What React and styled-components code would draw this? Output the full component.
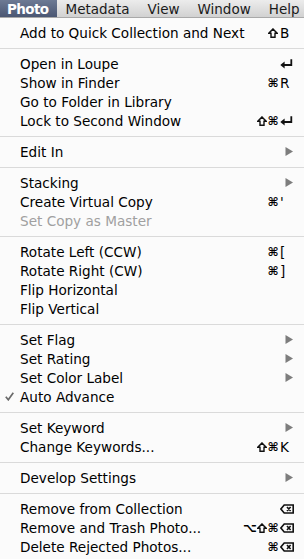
import styled, { createGlobalStyle } from "styled-components";

const GlobalStyle = createGlobalStyle`
  html, body {
    margin: 0;
    padding: 0;
    background: #fbfbfb;
  }
  body {
    font-family: "DejaVu Sans", "Liberation Sans", sans-serif;
    -webkit-font-smoothing: antialiased;
  }
`;

const menuTitles = ["Photo", "Metadata", "View", "Window", "Help"];

// each entry is a row, or "-" for a separator
const items = [
  { label: "Add to Quick Collection and Next", mods: "⇧", key: "B" },
  "-",
  { label: "Open in Loupe", key: "return" },
  { label: "Show in Finder", mods: "⌘", key: "R" },
  { label: "Go to Folder in Library" },
  { label: "Lock to Second Window", mods: "⇧⌘", key: "return" },
  "-",
  { label: "Edit In", submenu: true },
  "-",
  { label: "Stacking", submenu: true },
  { label: "Create Virtual Copy", mods: "⌘", key: "'" },
  { label: "Set Copy as Master", disabled: true },
  "-",
  { label: "Rotate Left (CCW)", mods: "⌘", key: "[" },
  { label: "Rotate Right (CW)", mods: "⌘", key: "]" },
  { label: "Flip Horizontal" },
  { label: "Flip Vertical" },
  "-",
  { label: "Set Flag", submenu: true },
  { label: "Set Rating", submenu: true },
  { label: "Set Color Label", submenu: true },
  { label: "Auto Advance", checked: true },
  "-",
  { label: "Set Keyword", submenu: true },
  { label: "Change Keywords...", mods: "⇧⌘", key: "K" },
  "-",
  { label: "Develop Settings", submenu: true },
  "-",
  { label: "Remove from Collection", key: "delete" },
  { label: "Remove and Trash Photo...", mods: "⌥⇧⌘", key: "delete" },
  { label: "Delete Rejected Photos...", mods: "⌘", key: "delete" },
];

function ShiftIcon() {
  return (
    <svg width="10" height="10" viewBox="0 0 10 10">
      <path
        d="M5 0.9 L9.2 5.3 H7 V9.2 H3 V5.3 H0.8 Z"
        fill="none"
        stroke="#111"
        strokeWidth="1.4"
        strokeLinejoin="miter"
      />
    </svg>
  );
}

function ReturnIcon() {
  return (
    <svg width="13" height="10" viewBox="0 0 13 10">
      <path d="M11.3 0.3 V6 H3" fill="none" stroke="#111" strokeWidth="1.8" />
      <path d="M0.3 6 L4.6 2.6 V9.4 Z" fill="#111" />
    </svg>
  );
}

function DeleteIcon() {
  return (
    <svg width="14" height="10" viewBox="0 0 14 10">
      <path
        d="M4.2 1 H13.2 V9 H4.2 L0.9 5 Z"
        fill="none"
        stroke="#111"
        strokeWidth="1.6"
      />
      <path d="M7 3 L10.6 7 M10.6 3 L7 7" stroke="#111" strokeWidth="1.6" />
    </svg>
  );
}

function SubmenuArrow() {
  return (
    <svg width="8" height="9" viewBox="0 0 8 9">
      <path d="M0.5 0 L8 4.5 L0.5 9 Z" fill="#7d7d7d" />
    </svg>
  );
}

function CheckIcon() {
  return (
    <svg width="9" height="9" viewBox="0 0 9 9">
      <path
        d="M0.8 4.8 L3.3 7.8 L8.3 0.8"
        fill="none"
        stroke="#6a6a6a"
        strokeWidth="1.7"
      />
    </svg>
  );
}

function renderKey(key) {
  if (key === "return") return <ReturnIcon />;
  if (key === "delete") return <DeleteIcon />;
  return key;
}

function App() {
  return (
    <>
      <GlobalStyle />
      <Wrapper>
        <MenuBar>
          {menuTitles.map((t, i) => (
            <MenuTitle key={t} $active={i === 0}>
              {t}
            </MenuTitle>
          ))}
        </MenuBar>
        <Menu>
          {items.map((item, i) =>
            item === "-" ? (
              <Separator key={i} />
            ) : (
              <Item key={i} $disabled={item.disabled}>
                <Gutter>{item.checked && <CheckIcon />}</Gutter>
                <Label>{item.label}</Label>
                {item.submenu && (
                  <Arrow>
                    <SubmenuArrow />
                  </Arrow>
                )}
                {item.key && (
                  <Shortcut>
                    <Mods>
                      {(item.mods || "").split("").map((m, j) => (
                        <Mod key={j}>{m === "⇧" ? <ShiftIcon /> : m}</Mod>
                      ))}
                    </Mods>
                    <Key>{renderKey(item.key)}</Key>
                  </Shortcut>
                )}
              </Item>
            )
          )}
        </Menu>
      </Wrapper>
    </>
  );
}

const Wrapper = styled.div`
  width: 304px;
  height: 559px;
  overflow: hidden;
  background: #fbfbfb;
`;

const MenuBar = styled.div`
  display: flex;
  align-items: stretch;
  height: 17px;
  background: linear-gradient(#ececec, #d2d2d2);
  border-bottom: 1px solid #a9a9a9;
`;

const MenuTitle = styled.div`
  display: flex;
  align-items: center;
  padding: ${(p) => (p.$active ? "0 8px 0 7px" : "0 9px")};
  font-size: 13.5px;
  font-weight: ${(p) => (p.$active ? "bold" : "normal")};
  letter-spacing: ${(p) => (p.$active ? "-0.6px" : "0")};
  color: ${(p) => (p.$active ? "#fff" : "#1a1a1a")};
  background: ${(p) =>
    p.$active ? "linear-gradient(#6d7a94, #4b5773)" : "transparent"};
  white-space: nowrap;
`;

const Menu = styled.div`
  padding-top: 5px;
`;

const Item = styled.div`
  display: flex;
  align-items: center;
  height: 19px;
  padding-right: 10px;
  font-size: 13.6px;
  color: ${(p) => (p.$disabled ? "#a0a0a0" : "#000")};
  white-space: nowrap;
`;

const Gutter = styled.div`
  width: 20px;
  display: flex;
  justify-content: flex-end;
  padding-right: 6px;
  box-sizing: border-box;
`;

const Label = styled.div`
  flex: 1;
`;

const Arrow = styled.div`
  display: flex;
  align-items: center;
  padding-right: 1px;
`;

const Shortcut = styled.div`
  display: flex;
  align-items: center;
`;

const Mods = styled.span`
  display: flex;
  align-items: center;
  justify-content: flex-end;
  gap: 1.5px;
  padding-right: 2px;
`;

const Mod = styled.span`
  display: flex;
  align-items: center;
  justify-content: center;
  width: 10px;
  font-size: 12px;
  font-weight: bold;
  overflow: visible;
`;

const Key = styled.span`
  width: 14px;
  display: flex;
  align-items: center;
  font-size: 13.6px;
`;

const Separator = styled.div`
  height: 12px;
  display: flex;
  align-items: center;

  &::after {
    content: "";
    flex: 1;
    height: 1px;
    background: #dadada;
  }
`;

export default App;
